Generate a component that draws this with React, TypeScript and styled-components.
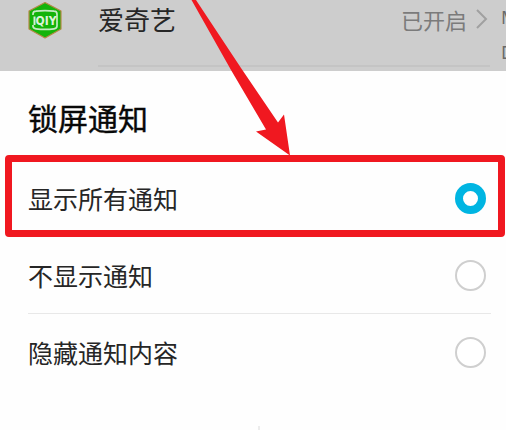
import React, { useState } from "react";
import styled, { createGlobalStyle } from "styled-components";

const GlobalStyle = createGlobalStyle`
  *, *::before, *::after { box-sizing: border-box; }
  body {
    margin: 0;
    background: #fefefe;
    color: #262626;
    font-family: "Noto Sans CJK SC", sans-serif;
    overflow: hidden;
  }
`;

const Page = styled.div`
  position: relative;
  display: flex;
  flex-direction: column;
  min-height: 100vh;
`;

const Backdrop = styled.header`
  display: flex;
  background: #cdcdcd;
  height: 71px;
  overflow: hidden;
`;

const AppRow = styled.button`
  flex: 1;
  display: flex;
  align-items: stretch;
  gap: 35px;
  padding: 0 0 4px 27px;
  border: 0;
  background: none;
  color: inherit;
  font: inherit;
  text-align: left;
`;

const AppLogo = styled.svg`
  flex: none;
  width: 36px;
  height: 38px;
  margin-top: 1px;
`;

const AppInfo = styled.span`
  flex: 1;
  display: flex;
  align-items: flex-start;
  justify-content: space-between;
  padding-right: 1px;
  border-bottom: 2px solid #c4c4c4;
`;

const AppName = styled.span`
  font-size: 26px;
  line-height: 38px;
`;

const Status = styled.span`
  display: flex;
  align-items: center;
  gap: 8px;
  color: #7b7b7b;
  font-size: 22px;
  line-height: 38px;
`;

const Chevron = styled.svg`
  width: 14px;
  height: 20px;
`;

const NextPane = styled.aside`
  flex: none;
  width: 16px;
  padding-left: 11px;
  overflow: hidden;
  color: #6a6a6a;
  font-family: "Noto Sans", sans-serif;
  font-size: 18px;
  line-height: 35px;
  white-space: nowrap;
`;

const Sheet = styled.fieldset`
  min-width: 0;
  margin: 0;
  padding: 0 15px 0 28px;
  border: 0;
`;

const Title = styled.legend`
  padding: 23px 0 20px;
  color: #080808;
  font-size: 30px;
  font-weight: 400;
  line-height: 46px;
  -webkit-text-stroke: 0.4px currentColor;
`;

const Option = styled.label<{ $divided?: boolean }>`
  position: relative;
  display: flex;
  align-items: center;
  justify-content: space-between;
  height: 77px;
  padding-right: 5px;
  border-bottom: 1px solid ${(p) => (p.$divided ? "#e8e8e8" : "transparent")};
  font-size: 25px;
  line-height: 38px;
`;

const Radio = styled.input`
  appearance: none;
  width: 31px;
  height: 31px;
  margin: 0;
  border: 2px solid #cfcfcf;
  border-radius: 50%;
  background: #fff;

  &:checked {
    border: 8px solid #00b5e2;
  }
`;

const Highlight = styled.span`
  position: absolute;
  inset: -5px -14px -1px -23px;
  border: 7px solid #f01820;
  border-radius: 4px;
  pointer-events: none;
`;

const Pointer = styled.svg`
  position: absolute;
  top: 0;
  left: 180px;
  width: 130px;
  height: 160px;
  pointer-events: none;
`;

const Separator = styled.span`
  align-self: center;
  width: 2px;
  height: 4px;
  margin: auto 0 0 12px;
  background: #ececec;
`;

const options = ["显示所有通知", "不显示通知", "隐藏通知内容"];

export default function App() {
  const [selected, setSelected] = useState(0);

  return (
    <>
      <GlobalStyle />
      <Page>
        <Backdrop>
          <AppRow type="button">
            <AppLogo viewBox="0 0 36 38" aria-hidden="true">
              <path d="M18 1.500 34 10V28L18 37 2 28V10Z" fill="#14b40a" stroke="#b48a45" strokeWidth="1.200" strokeLinejoin="round" />
              <path d="M6 14V13Q6 10.500 9 10.200Q18 9 27 10.200Q30 10.500 30 13V25Q30 27.500 27 27.800Q18 29 9 27.800Q6 27.500 6 25V24" fill="none" stroke="#c5eac2" strokeWidth="1.700" />
              <path d="M7.500 15.500V24" stroke="#d5efd3" strokeWidth="2" />
              <text x="19" y="24" textAnchor="middle" fill="#dcf3da" fontFamily="DejaVu Sans Condensed, Liberation Sans, sans-serif" fontSize="12" fontWeight="700">
                QIY
              </text>
            </AppLogo>
            <AppInfo>
              <AppName>爱奇艺</AppName>
              <Status>
                已开启
                <Chevron viewBox="0 0 14 20" fill="none" aria-hidden="true">
                  <path d="m2 1 9 9-9 9" stroke="#a0a0a0" strokeWidth="2" />
                </Chevron>
              </Status>
            </AppInfo>
          </AppRow>
          <NextPane>
            M<br />D
          </NextPane>
        </Backdrop>
        <Sheet>
          <Title>锁屏通知</Title>
          {options.map((label, i) => (
            <Option key={label} $divided={i === 1}>
              {label}
              <Radio
                type="radio"
                name="lock-screen"
                checked={selected === i}
                onChange={() => setSelected(i)}
              />
              {i === 0 && <Highlight />}
            </Option>
          ))}
        </Sheet>
        <Separator />
        <Pointer viewBox="0 0 130 160" aria-hidden="true">
          <path d="M11.500 0H16L61 68 98 122.500 104 114.500 110 155.500 76 131.500 86 129.500 51 70Z" fill="#f01820" />
        </Pointer>
      </Page>
    </>
  );
}
